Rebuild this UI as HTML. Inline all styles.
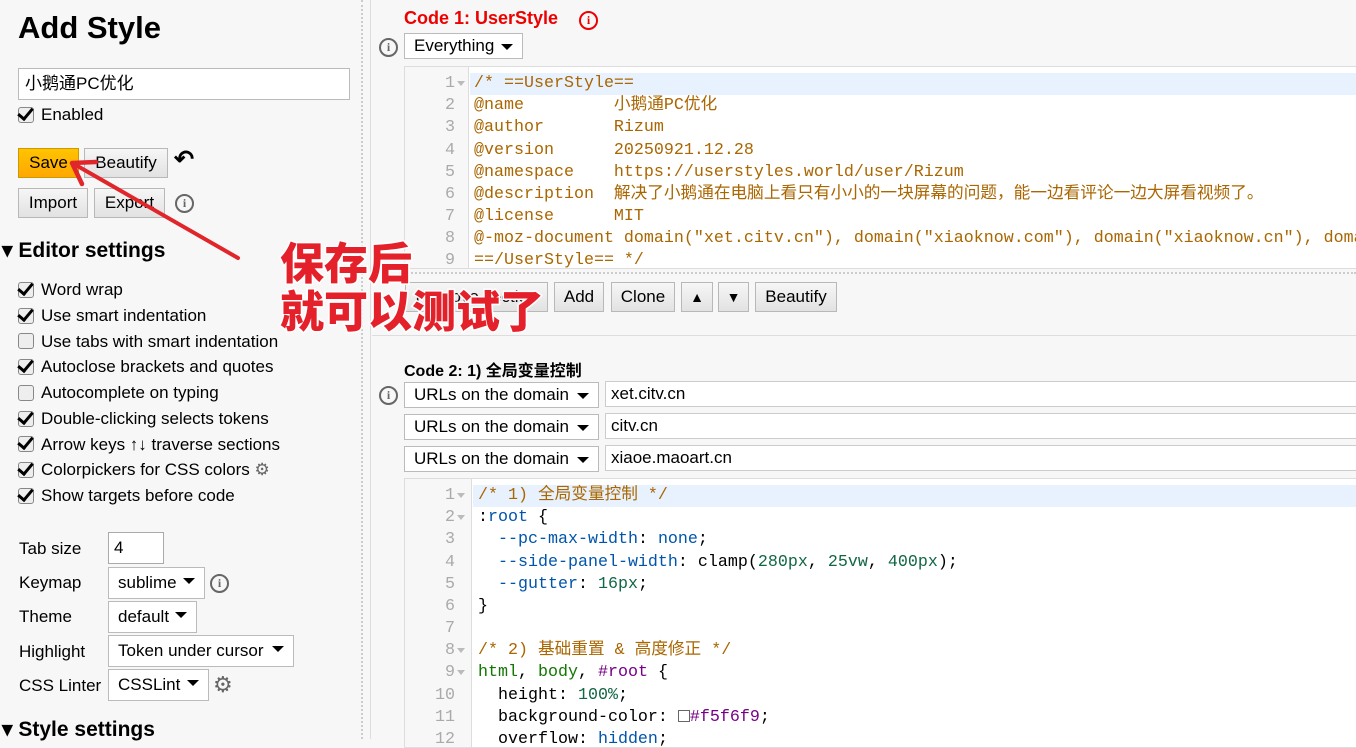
<!DOCTYPE html>
<html><head><meta charset="utf-8"><style>
*{box-sizing:border-box;margin:0;padding:0}
body{width:1356px;height:739px;overflow:hidden;background:#f7f7f7;font-family:"Liberation Sans","Noto Sans CJK SC",sans-serif;color:#000;position:relative;font-size:16px}
.a{position:absolute;white-space:nowrap}
.btn{position:absolute;border:1px solid #b8b8b8;background:linear-gradient(#f6f6f6,#e2e2e2);font-size:17px;text-align:center;line-height:28px;height:30px}
.cb{position:absolute;width:16px;height:16px;border:1px solid #888;border-radius:3px;background:#eee}
.ck::after{content:"";position:absolute;left:2px;top:-3px;width:6px;height:12px;border:solid #000;border-width:0 3px 3px 0;transform:rotate(40deg)}
.lbl{position:absolute;font-size:17px;white-space:nowrap}
.sel{position:absolute;background:#fff;border:1px solid #bbb;font-size:17px;padding-left:9px;line-height:23px;white-space:nowrap}
.sel::after{content:"";position:absolute;right:9px;top:10px;border:6px solid transparent;border-top:6px solid #000;border-bottom:none}
.inp{position:absolute;background:#fff;border:1px solid #ccc;font-size:17px;padding-left:5px;line-height:23px}
.info{position:absolute;width:19px;height:19px;border:2px solid #666;border-radius:50%;font:bold 12px/15px "Liberation Serif",serif;text-align:center;color:#666}
.ed{position:absolute;background:#fff;border:1px solid #ddd;overflow:hidden;font-family:"Liberation Mono","Noto Sans CJK SC",monospace;font-size:16.67px}
.gut{position:absolute;left:0;top:0;bottom:0;width:64px;background:#f7f7f7;border-right:1px solid #ddd}
.ln{position:absolute;height:22.2px;line-height:22.2px;left:0;right:0;white-space:pre}
.n{position:absolute;left:0;width:50px;text-align:right;color:#aaa}
.c{position:absolute;left:69px}
.o{color:#a60}.k{color:#170}.v{color:#05a}.m{color:#164}.q{color:#708}
.hl{background:#e8f2ff}
.fold{position:absolute;left:52px;top:8px;border:4px solid transparent;border-top:5px solid #bbb}
</style></head><body>
<div class="a" style="left:18px;top:10px;font-size:31px;font-weight:bold">Add Style</div>
<div class="inp" style="left:18px;top:68px;width:332px;height:32px;line-height:30px;padding-left:6px;border-color:#bbb">小鹅通PC优化</div>
<div class="cb ck" style="left:18px;top:107px"></div><div class="lbl" style="left:41px;top:105px">Enabled</div>
<div class="btn" style="left:18px;top:148px;width:61px;background:linear-gradient(#ffc400,#ffa800);border-color:#c90">Save</div>
<div class="btn" style="left:84px;top:148px;width:84px">Beautify</div>
<div class="a" style="left:174px;top:145px;font-size:24px;font-weight:bold">↶</div>
<div class="btn" style="left:18px;top:188px;width:70px">Import</div>
<div class="btn" style="left:94px;top:188px;width:71px">Export</div>
<div class="info" style="left:175px;top:194px">i</div>
<div class="a" style="left:2px;top:238px;font-size:21px;font-weight:bold">▾ Editor settings</div>
<div class="cb ck" style="left:18px;top:282px"></div><div class="lbl" style="left:41px;top:280px">Word wrap</div>
<div class="cb ck" style="left:18px;top:308px"></div><div class="lbl" style="left:41px;top:306px">Use smart indentation</div>
<div class="cb" style="left:18px;top:333px"></div><div class="lbl" style="left:41px;top:332px">Use tabs with smart indentation</div>
<div class="cb ck" style="left:18px;top:359px"></div><div class="lbl" style="left:41px;top:357px">Autoclose brackets and quotes</div>
<div class="cb" style="left:18px;top:385px"></div><div class="lbl" style="left:41px;top:383px">Autocomplete on typing</div>
<div class="cb ck" style="left:18px;top:411px"></div><div class="lbl" style="left:41px;top:409px">Double-clicking selects tokens</div>
<div class="cb ck" style="left:18px;top:436px"></div><div class="lbl" style="left:41px;top:435px">Arrow keys ↑↓ traverse sections</div>
<div class="cb ck" style="left:18px;top:462px"></div><div class="lbl" style="left:41px;top:460px">Colorpickers for CSS colors <span style="color:#666">⚙</span></div>
<div class="cb ck" style="left:18px;top:488px"></div><div class="lbl" style="left:41px;top:486px">Show targets before code</div>
<div class="lbl" style="left:19px;top:539px">Tab size</div><div class="inp" style="left:108px;top:532px;width:56px;height:32px;line-height:30px;border-color:#aaa">4</div>
<div class="lbl" style="left:19px;top:573px">Keymap</div><div class="sel" style="left:108px;top:567px;width:97px;height:32px;line-height:30px">sublime</div><div class="info" style="left:210px;top:574px">i</div>
<div class="lbl" style="left:19px;top:607px">Theme</div><div class="sel" style="left:108px;top:601px;width:89px;height:32px;line-height:30px">default</div>
<div class="lbl" style="left:19px;top:642px">Highlight</div><div class="sel" style="left:108px;top:635px;width:186px;height:32px;line-height:30px">Token under cursor</div>
<div class="lbl" style="left:19px;top:676px">CSS Linter</div><div class="sel" style="left:108px;top:669px;width:101px;height:32px;line-height:30px">CSSLint</div><div class="a" style="left:213px;top:672px;font-size:22px;color:#666">⚙</div>
<div class="a" style="left:2px;top:717px;font-size:21px;font-weight:bold">▾ Style settings</div>
<div class="a" style="left:361px;top:0;width:2px;height:739px;border-left:2px dotted #ccc"></div>
<div class="a" style="left:370px;top:0;width:1px;height:739px;background:#ddd"></div>

<div class="a" style="left:404px;top:8px;font-size:18px;font-weight:bold;color:#e00">Code 1: UserStyle</div>
<div class="info" style="left:579px;top:11px;border-color:#e00;color:#e00">i</div>
<div class="info" style="left:379px;top:38px">i</div>
<div class="sel" style="left:404px;top:33px;width:119px;height:26px">Everything</div>
<div class="ed" style="left:404px;top:66px;width:960px;height:203px">
<div class="gut"></div>
<div class="ln hl" style="top:6px;left:65px"></div>
<div class="ln" style="top:6px"><span class="n">1</span><span class="fold"></span><span class="c o">/* ==UserStyle==</span></div>
<div class="ln" style="top:28px"><span class="n">2</span><span class="c o">@name         小鹅通PC优化</span></div>
<div class="ln" style="top:50px"><span class="n">3</span><span class="c o">@author       Rizum</span></div>
<div class="ln" style="top:73px"><span class="n">4</span><span class="c o">@version      20250921.12.28</span></div>
<div class="ln" style="top:95px"><span class="n">5</span><span class="c o">@namespace    https://userstyles.world/user/Rizum</span></div>
<div class="ln" style="top:117px"><span class="n">6</span><span class="c o">@description  解决了小鹅通在电脑上看只有小小的一块屏幕的问题，能一边看评论一边大屏看视频了。</span></div>
<div class="ln" style="top:139px"><span class="n">7</span><span class="c o">@license      MIT</span></div>
<div class="ln" style="top:161px"><span class="n">8</span><span class="c o">@-moz-document domain("xet.citv.cn"), domain("xiaoknow.com"), domain("xiaoknow.cn"), domain</span></div>
<div class="ln" style="top:183px"><span class="n">9</span><span class="c o">==/UserStyle== */</span></div>
</div>
<div class="a" style="left:404px;top:272px;width:952px;border-top:2px dotted #ccc"></div>
<div class="btn" style="left:405px;top:282px;width:143px">Remove section</div>
<div class="btn" style="left:554px;top:282px;width:50px">Add</div>
<div class="btn" style="left:611px;top:282px;width:64px">Clone</div>
<div class="btn" style="left:681px;top:282px;width:32px;font-size:14px">▲</div>
<div class="btn" style="left:718px;top:282px;width:31px;font-size:14px">▼</div>
<div class="btn" style="left:755px;top:282px;width:82px">Beautify</div>
<div class="a" style="left:372px;top:335px;width:984px;border-top:1px solid #ddd"></div>

<div class="a" style="left:404px;top:357px;font-size:16px;font-weight:bold">Code 2: 1) 全局变量控制</div>
<div class="info" style="left:379px;top:386px">i</div>
<div class="sel" style="left:404px;top:382px;width:195px;height:26px">URLs on the domain</div>
<div class="inp" style="left:605px;top:381px;width:760px;height:26px">xet.citv.cn</div>
<div class="sel" style="left:404px;top:414px;width:195px;height:26px">URLs on the domain</div>
<div class="inp" style="left:605px;top:413px;width:760px;height:26px">citv.cn</div>
<div class="sel" style="left:404px;top:446px;width:195px;height:26px">URLs on the domain</div>
<div class="inp" style="left:605px;top:445px;width:760px;height:26px">xiaoe.maoart.cn</div>
<div class="ed" style="left:404px;top:478px;width:960px;height:270px">
<div class="gut" style="width:67px"></div>
<div class="ln hl" style="top:6px;left:68px"></div>
<div class="ln" style="top:6px"><span class="n">1</span><span class="fold"></span><span class="c o" style="left:73px">/* 1) 全局变量控制 */</span></div>
<div class="ln" style="top:28px"><span class="n">2</span><span class="fold"></span><span class="c" style="left:73px">:<span class="v">root</span> {</span></div>
<div class="ln" style="top:50px"><span class="n">3</span><span class="c" style="left:73px">  <span class="v">--pc-max-width</span>: <span class="v">none</span>;</span></div>
<div class="ln" style="top:73px"><span class="n">4</span><span class="c" style="left:73px">  <span class="v">--side-panel-width</span>: clamp(<span class="m">280px</span>, <span class="m">25vw</span>, <span class="m">400px</span>);</span></div>
<div class="ln" style="top:95px"><span class="n">5</span><span class="c" style="left:73px">  <span class="v">--gutter</span>: <span class="m">16px</span>;</span></div>
<div class="ln" style="top:117px"><span class="n">6</span><span class="c" style="left:73px">}</span></div>
<div class="ln" style="top:139px"><span class="n">7</span></div>
<div class="ln" style="top:161px"><span class="n">8</span><span class="fold"></span><span class="c o" style="left:73px">/* 2) 基础重置 &amp; 高度修正 */</span></div>
<div class="ln" style="top:183px"><span class="n">9</span><span class="fold"></span><span class="c" style="left:73px"><span class="k">html</span>, <span class="k">body</span>, <span class="q">#root</span> {</span></div>
<div class="ln" style="top:206px"><span class="n">10</span><span class="c" style="left:73px">  height: <span class="m">100%</span>;</span></div>
<div class="ln" style="top:228px"><span class="n">11</span><span class="c" style="left:73px">  background-color: <span style="display:inline-block;width:12px;height:12px;border:1px solid #666;vertical-align:-1px"></span><span class="q">#f5f6f9</span>;</span></div>
<div class="ln" style="top:250px"><span class="n">12</span><span class="c" style="left:73px">  overflow: <span class="v">hidden</span>;</span></div>
</div>

<svg class="a" style="left:60px;top:150px" width="190" height="115"><line x1="178" y1="108" x2="14" y2="14" stroke="#e0262b" stroke-width="4" stroke-linecap="round"/><polyline points="36,12 12,13 22,34" fill="none" stroke="#e0262b" stroke-width="4.5" stroke-linecap="round" stroke-linejoin="round"/></svg>
<div class="a" style="left:280px;top:236px;font-family:'Noto Sans CJK SC',sans-serif;font-weight:900;font-size:44px;line-height:48px;color:#e4202a;-webkit-text-stroke:3px #fff;paint-order:stroke fill;text-shadow:0 0 3px #fff">保存后<br>就可以测试了</div>
</body></html>
